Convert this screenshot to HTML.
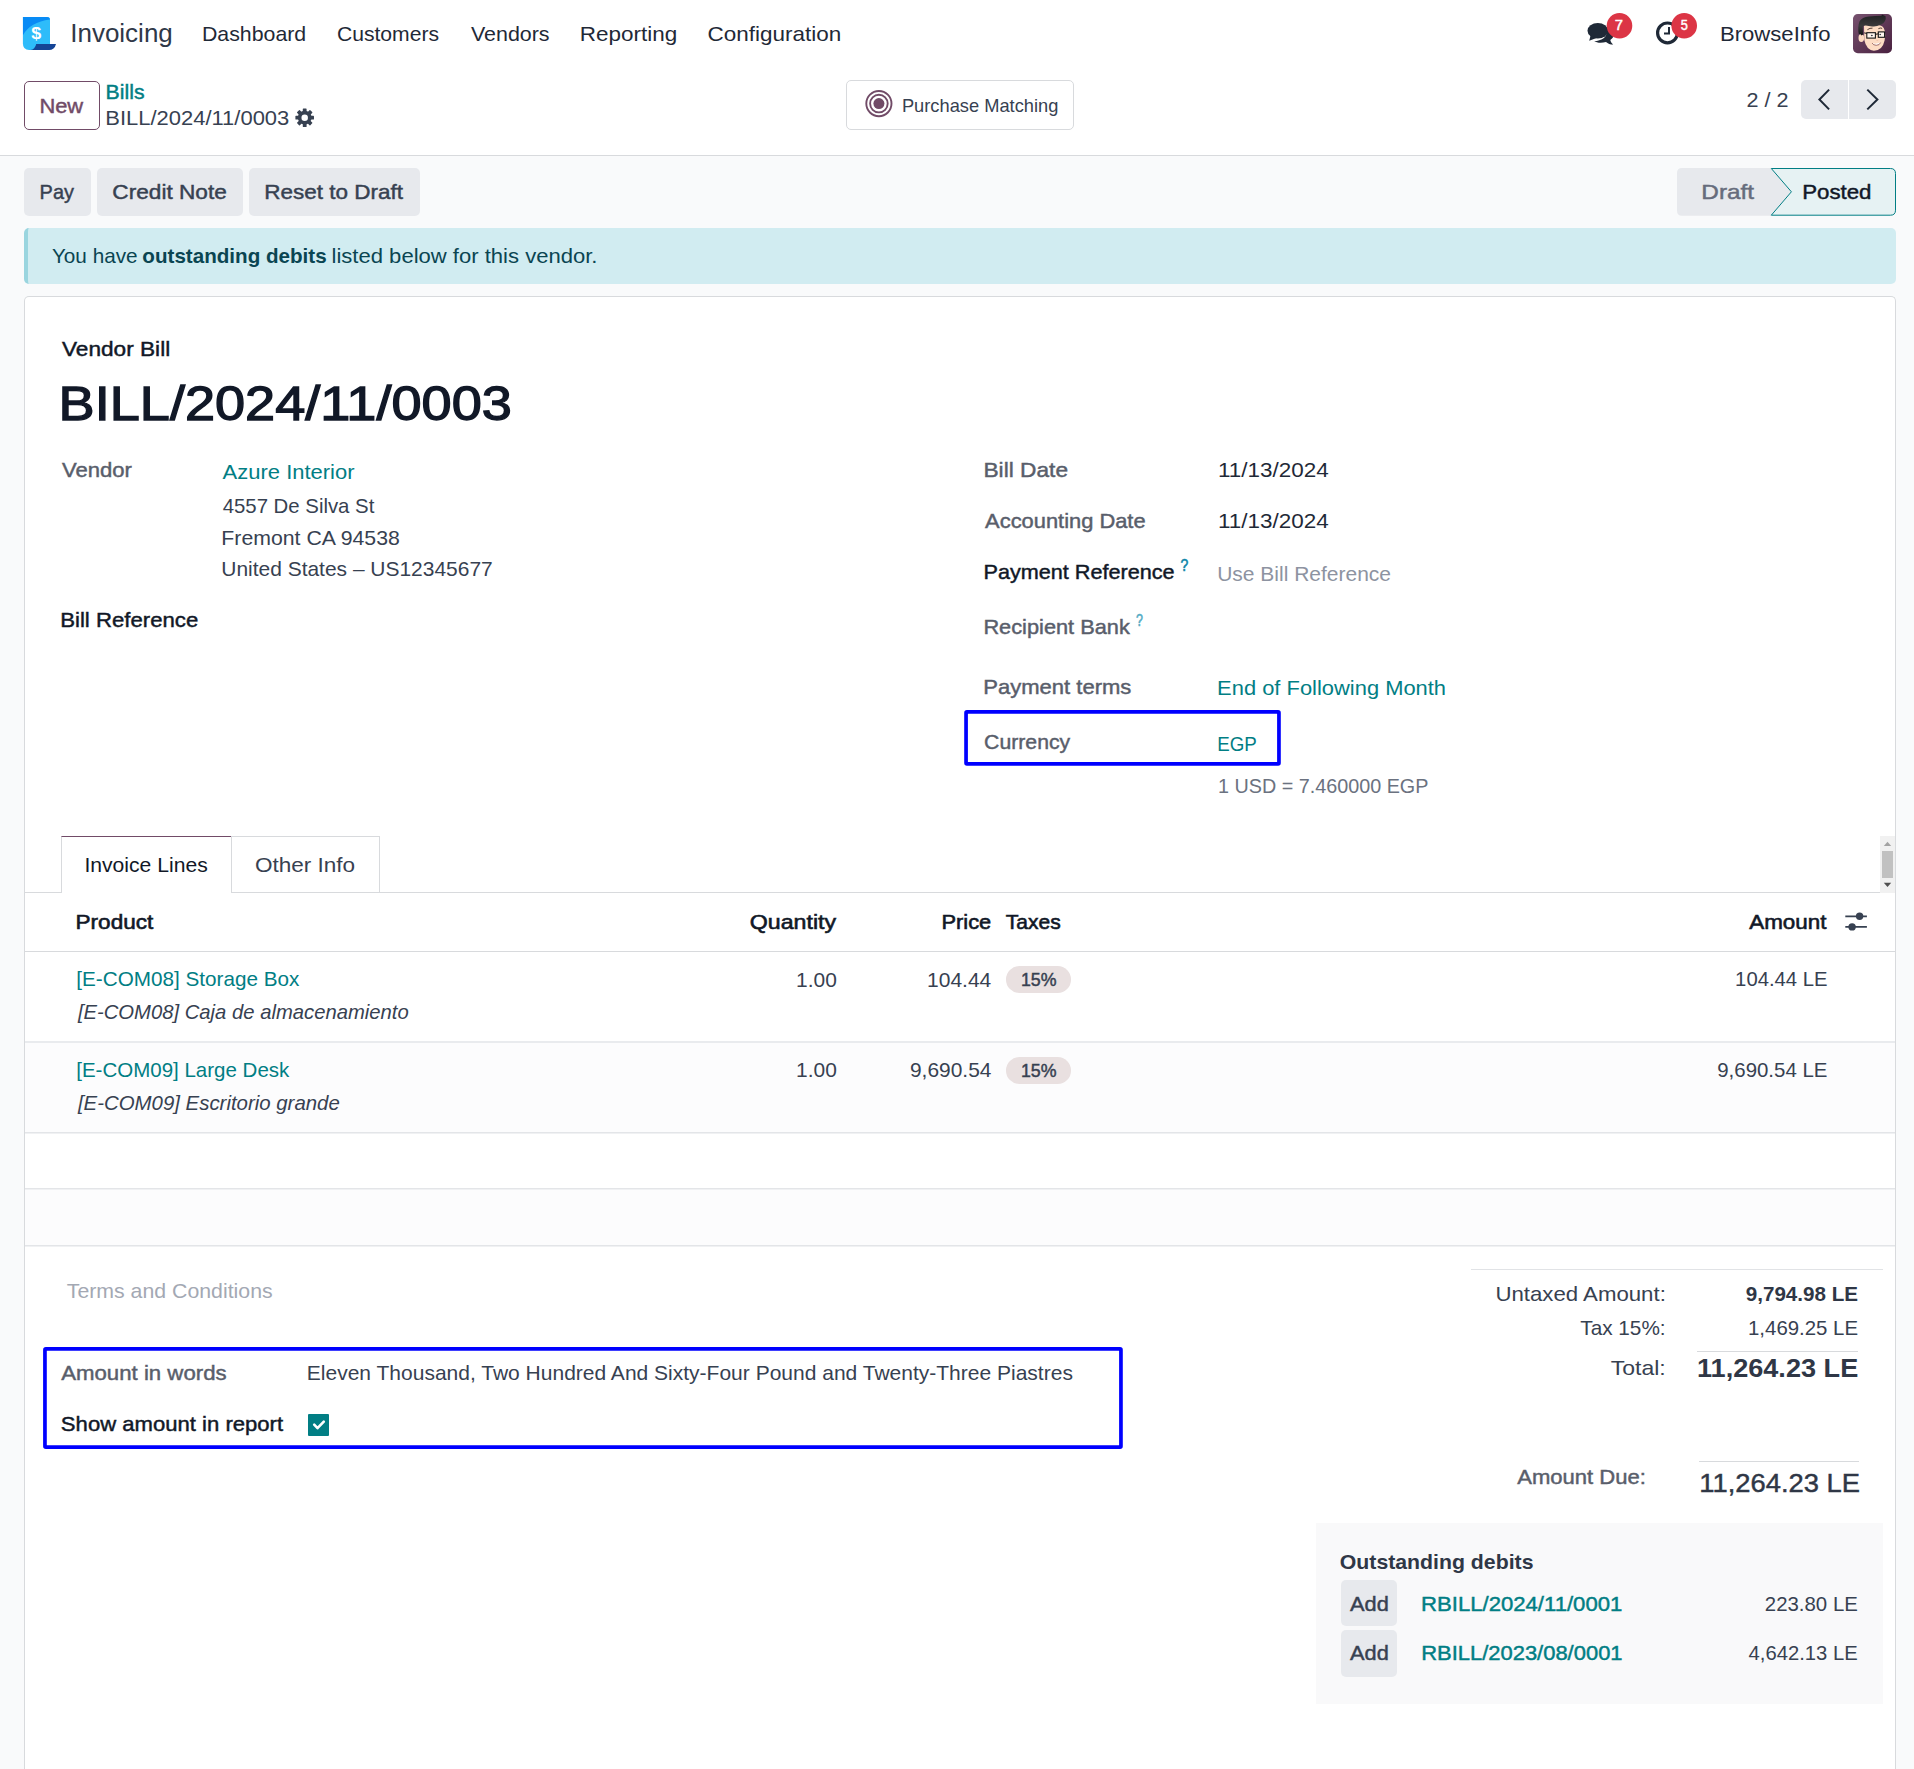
<!DOCTYPE html>
<html lang="en">
<head>
<meta charset="utf-8">
<title>Odoo - BILL/2024/11/0003</title>
<style>
html,body{margin:0;padding:0;}
html{width:1914px;height:1769px;overflow:hidden;}
body{width:1914px;height:1769px;overflow:hidden;background:#f9fafb;position:relative;
 font-family:"Liberation Sans",sans-serif;color:#374151;}
.a{position:absolute;box-sizing:border-box;}
.t{position:absolute;left:0;top:0;white-space:pre;line-height:1;margin:0;padding:0;font-weight:400;transform-origin:0 0;}
.t b{font-weight:700;}
.w-m{-webkit-text-stroke:0.45px currentColor;}
.w-x{-webkit-text-stroke:1.3px currentColor;}
.w-s{-webkit-text-stroke:0.6px currentColor;}
.w-b{font-weight:700;}
.i{font-style:italic;}
.btn{background:#e7e9ed;border-radius:5px;}
.hl{height:1px;background:#dcdee2;}
.hl2{height:2px;background:linear-gradient(#e3e5e8 50%,#f0f1f3 50%);}
svg{position:absolute;overflow:visible;}

</style>
</head>
<body>
<!-- ===== top navbar + control panel ===== -->
<header class="a s" id="top" style="left:0;top:0;width:1914px;height:156px;background:#fff;border-bottom:1px solid #d8dadd;"></header>

<!-- app logo -->
<svg class="s" style="left:0;top:0" width="80" height="60" viewBox="0 0 80 60">
 <defs><clipPath id="lg"><path d="M22.9 16.9 H47 Q50 16.9 50 20 V50 H29.2 Q22.9 50 22.9 43.6 Z"/></clipPath></defs>
 <path d="M22.9 16.9 H47 Q50 16.9 50 20 V50 H29.2 Q22.9 50 22.9 43.6 Z" fill="#2ebcfa"/>
 <path clip-path="url(#lg)" d="M22.9 16.9 H50 V19.4 Q30 22 22.9 35.2 Z" fill="#088bf5"/>
 <path d="M36.2 43.9 H56 Q54.6 50 48.8 50 H30.4 Q35 49.4 36.2 43.9 Z" fill="#144496"/>
</svg>

<!-- systray: messages -->
<svg class="s" style="left:0;top:0" width="1914" height="70" viewBox="0 0 1914 70">
 <g fill="#1f2937">
  <path d="M1600.6 27.2 c8.2 0 13.3 2.6 13.3 6.9 c0 2.6 -1.4 4.6 -3.6 5.9 c0.4 1.7 1.3 3.2 2.9 4.6 c-2.9 0 -5.4 -1 -7.2 -2.6 c-1.7 0.5 -3.5 0.7 -5.4 0.7 c-2.6 0 -4.8 -0.6 -6.5 -1.5 c7.6 -0.4 12.6 -3.8 12.6 -8.7 c0 -2 -0.9 -3.8 -2.4 -5.2 Z"/>
  <ellipse cx="1597.8" cy="30.7" rx="10.3" ry="7.7"/>
  <path d="M1590.6 35.5 L1589.2 40.8 L1596.6 38 Z"/>
 </g>
 <circle cx="1619.5" cy="25.8" r="12.8" fill="#dc3545"/>
 <!-- activities clock -->
 <circle cx="1667.5" cy="32.9" r="9.9" fill="none" stroke="#1f2937" stroke-width="3.2"/>
 <path d="M1669 27 V33.6 H1664" fill="none" stroke="#1f2937" stroke-width="2"/>
 <circle cx="1684.2" cy="25.8" r="12.8" fill="#dc3545"/>
</svg>

<!-- avatar -->
<svg class="s" style="left:1853px;top:13.8px" width="39" height="39.2" viewBox="0 0 39 39.2">
 <defs>
  <linearGradient id="avg" x1="0" y1="0" x2="1" y2="1"><stop offset="0" stop-color="#77526f"/><stop offset="1" stop-color="#49213f"/></linearGradient>
  <linearGradient id="hair" x1="0" y1="0" x2="0" y2="1"><stop offset="0" stop-color="#202022"/><stop offset="0.55" stop-color="#3a3a3c"/><stop offset="1" stop-color="#141416"/></linearGradient>
  <clipPath id="avc"><rect width="39" height="39.2" rx="4.8"/></clipPath>
 </defs>
 <rect width="39" height="39.2" rx="4.8" fill="url(#avg)"/>
 <g clip-path="url(#avc)">
  <ellipse cx="8.3" cy="24" rx="2.8" ry="3.9" fill="#fbd9c0"/>
  <path d="M11 12 Q11 10.5 20 10.5 Q31.5 10 32 17.5 Q32.6 22 31.6 26.5 Q29.5 36.7 20.9 36.7 Q13.4 36.2 11.3 26 Z" fill="#fddcc4"/>
  <path d="M5.9 20.4 Q4.2 13 6.6 7.2 Q9 3.2 16 2.4 Q22 1.7 28.5 1.7 L29 0.6 L32.6 2.2 Q33.2 5 32 6.9 Q30.8 9.4 27.9 10.7 Q24 12.4 20.7 12.4 Q16 12.6 12.8 11.6 Q10.6 11.4 9.8 12.8 L10.1 20.4 L8.5 21.4 Q7 19.4 5.9 20.4 Z" fill="url(#hair)"/>
  <path d="M14.7 15.5 Q17 13.8 19.1 14.1 M25.7 14.5 Q27.4 13.5 28.8 14.2" stroke="#40302a" stroke-width="0.9" fill="none" stroke-linecap="round"/>
  <rect x="13.8" y="18.7" width="8.6" height="5.4" fill="#fff6ee" stroke="#141414" stroke-width="1.1"/>
  <rect x="25.3" y="17.9" width="6.3" height="5.4" fill="#fff6ee" stroke="#141414" stroke-width="1.1"/>
  <path d="M22.4 20.3 L25.3 19.9 M13.8 19.4 L11.2 18.9" stroke="#141414" stroke-width="1"/>
  <ellipse cx="18.8" cy="21.5" rx="1" ry="0.8" fill="#3b3b45"/><ellipse cx="27.2" cy="20.5" rx="0.9" ry="0.8" fill="#3b3b45"/>
  <path d="M23.4 26.3 Q24.4 26.9 25.3 26.2" stroke="#e9b49c" stroke-width="0.7" fill="none"/>
  <path d="M19.1 29.1 Q23.4 30.4 27.6 28.6 Q26.6 31.4 23.2 31.3 Q20.2 31.2 19.1 29.1 Z" fill="#ffffff"/>
  <path d="M19.1 29.1 Q20.2 31.2 23.2 31.3 Q26.6 31.4 27.6 28.6" fill="none" stroke="#7d3b3a" stroke-width="0.7"/>
 </g>
</svg>

<!-- New button -->
<div class="a s" style="left:24px;top:81px;width:76px;height:48.8px;border:1px solid #714B67;border-radius:5px;background:#fff"></div>
<!-- gear -->
<svg class="s" style="left:295px;top:107.8px" width="19.4" height="19.4" viewBox="-9.7 -9.7 19.4 19.4">
 <g fill="#374151">
  <circle r="6.9"/>
  <g id="teeth"><rect x="-1.9" y="-9.3" width="3.8" height="18.6" rx="0.6"/><rect x="-9.3" y="-1.9" width="18.6" height="3.8" rx="0.6"/></g>
  <use href="#teeth" transform="rotate(45)"/>
 </g>
 <circle r="3.25" fill="#fff"/>
</svg>

<!-- Purchase Matching smart button -->
<div class="a s" style="left:846.3px;top:80.3px;width:227.7px;height:49.3px;border:1px solid #d8dadd;border-radius:5px;background:#fff"></div>
<svg class="s" style="left:864px;top:89px" width="30" height="30" viewBox="864 89 30 30">
 <circle cx="878.9" cy="103.6" r="12.6" fill="none" stroke="#714B67" stroke-width="1.9"/>
 <circle cx="878.9" cy="103.6" r="8.8" fill="none" stroke="#714B67" stroke-width="1.9"/>
 <circle cx="878.9" cy="103.6" r="5.5" fill="#714B67"/>
</svg>

<!-- pager -->
<div class="a s" style="left:1801px;top:80px;width:46.9px;height:39px;background:#e7e9ed;border-radius:5px 0 0 5px"></div>
<div class="a s" style="left:1849.1px;top:80px;width:46.9px;height:39px;background:#e7e9ed;border-radius:0 5px 5px 0"></div>
<svg class="s" style="left:1801px;top:80px" width="95" height="39" viewBox="1801 80 95 39">
 <path d="M1829.1 89.6 L1819.4 99.5 L1829.1 109.4 M1867.3 89.6 L1877.4 99.5 L1867.3 109.4" fill="none" stroke="#1f2937" stroke-width="2"/>
</svg>

<!-- ===== status bar ===== -->
<div class="a s btn" style="left:24px;top:168px;width:66.8px;height:47.7px"></div>
<div class="a s btn" style="left:97px;top:168px;width:145.8px;height:47.7px"></div>
<div class="a s btn" style="left:249px;top:168px;width:171px;height:47.7px"></div>
<svg class="s" style="left:1677px;top:167px" width="220" height="50" viewBox="1677 167 220 50">
 <path d="M1682 168 H1771.3 L1791.4 191.8 L1771.3 215.7 H1682 Q1677 215.7 1677 210.7 V173 Q1677 168 1682 168 Z" fill="#e7e9ed"/>
 <path d="M1771.3 168.5 H1890.5 Q1895.5 168.5 1895.5 173.5 V210.2 Q1895.5 215.2 1890.5 215.2 H1771.3 L1791.4 191.8 Z" fill="#e6f2f3" stroke="#017e84" stroke-width="1"/>
</svg>

<!-- alert -->
<div class="a s" style="left:24px;top:228.2px;width:1872px;height:55.5px;background:#d1ecf1;border-radius:5px;border-left:4px solid #9ad5df"></div>

<!-- ===== form sheet ===== -->
<main class="a s" id="sheet" style="left:24px;top:296px;width:1872px;height:1473px;background:#fff;border:1px solid #d8dadd;border-bottom:0;border-radius:5px 5px 0 0"></main>

<!-- currency highlight -->
<svg class="s" style="left:0;top:700px" width="1914" height="80" viewBox="0 700 1914 80"><rect x="966.05" y="711.95" width="312.9" height="52" rx="0.9" fill="none" stroke="#0000ff" stroke-width="3.7"/></svg>

<!-- notebook tabs -->
<div class="a s hl" style="left:25px;top:892px;width:1855px;background:#d8dadd"></div>
<div class="a s" style="left:61.4px;top:836px;width:170.4px;height:57px;background:#fff;border:1px solid #d8dadd;border-bottom:0;border-top-color:#714B67"></div>
<div class="a s" style="left:230.8px;top:836px;width:149.4px;height:56px;background:#fff;border:1px solid #d8dadd;border-bottom:0"></div>
<!-- scrollbar -->
<div class="a s" style="left:1880px;top:836px;width:15px;height:56.8px;background:#f1f1f1"></div>
<div class="a s" style="left:1882.2px;top:851px;width:10.6px;height:27px;background:#c1c1c1"></div>
<svg class="s" style="left:1880px;top:836px" width="15" height="57" viewBox="1880 836 15 57">
 <path d="M1883.8 846 L1887.5 841.8 L1891.2 846 Z" fill="#a3a3a3"/>
 <path d="M1883.8 882.8 L1887.5 887 L1891.2 882.8 Z" fill="#505050"/>
</svg>

<!-- list rows -->
<div class="a s" style="left:25px;top:1042px;width:1870px;height:91px;background:#fcfcfd"></div>
<div class="a s" style="left:25px;top:1189px;width:1870px;height:57px;background:#fcfcfd"></div>
<div class="a s hl" style="left:25px;top:951px;width:1870px;background:#d8dadd"></div>
<div class="a s hl2" style="left:25px;top:1041px;width:1870px;background:#e9ebee"></div>
<div class="a s hl2" style="left:25px;top:1132px;width:1870px"></div>
<div class="a s hl2" style="left:25px;top:1188px;width:1870px"></div>
<div class="a s hl2" style="left:25px;top:1245px;width:1870px"></div>
<!-- tax badges -->
<div class="a s" style="left:1006px;top:966.3px;width:65px;height:26.8px;border-radius:13.3px;background:#e9e0e0"></div>
<div class="a s" style="left:1006px;top:1057.4px;width:65px;height:26.8px;border-radius:13.3px;background:#e9e0e0"></div>
<!-- optional columns icon -->
<svg class="s" style="left:1845px;top:910px" width="24" height="24" viewBox="1845 910 24 24">
 <path d="M1845.3 916.3 H1866.9 M1845.3 926.9 H1866.9" stroke="#374151" stroke-width="1.7" fill="none"/>
 <circle cx="1859.6" cy="916.3" r="3.7" fill="#374151"/><circle cx="1852.1" cy="926.9" r="3.7" fill="#374151"/>
</svg>

<!-- amount in words highlight -->
<svg class="s" style="left:0;top:1340px" width="1914" height="120" viewBox="0 1340 1914 120"><rect x="44.95" y="1348.95" width="1076" height="98.1" rx="0.9" fill="none" stroke="#0000ff" stroke-width="3.7"/></svg>
<div class="a s" style="left:308px;top:1414.2px;width:21px;height:21.5px;background:#017e84;border-radius:1px"></div>
<svg class="s" style="left:308px;top:1414px" width="21" height="22" viewBox="308 1414 21 22">
 <path d="M314.2 1424.7 L317.5 1428.2 L323.8 1421.6" fill="none" stroke="#fff" stroke-width="2.6" stroke-linecap="round" stroke-linejoin="round"/>
</svg>

<!-- totals -->
<div class="a s hl" style="left:1470.8px;top:1269.2px;width:412.2px;background:#e1e3e6"></div>
<div class="a s hl" style="left:1696.7px;top:1351.4px;width:161.1px;background:#d8dadd"></div>
<div class="a s hl" style="left:1699px;top:1461.2px;width:160px;background:#d8dadd"></div>
<!-- outstanding debits -->
<div class="a s" style="left:1316px;top:1522.5px;width:567px;height:181.5px;background:#f9f9fa"></div>
<div class="a s btn" style="left:1341px;top:1579.5px;width:55.7px;height:46.8px"></div>
<div class="a s btn" style="left:1341px;top:1630.2px;width:55.7px;height:47px"></div>

<!-- ===== text ===== -->
<span class="t" id="brand" style="font-size:26px;color:#2f3848;transform:translate(70.19px,20.00px) scaleX(1.0002);">Invoicing</span>
<span class="t" id="m1" style="font-size:21px;color:#1f2937;transform:translate(201.94px,23.00px) scaleX(1.0148);">Dashboard</span>
<span class="t" id="m2" style="font-size:21px;color:#1f2937;transform:translate(336.93px,23.00px) scaleX(1.0060);">Customers</span>
<span class="t" id="m3" style="font-size:21px;color:#1f2937;transform:translate(470.93px,23.00px) scaleX(1.0206);">Vendors</span>
<span class="t" id="m4" style="font-size:21px;color:#1f2937;transform:translate(579.71px,23.00px) scaleX(1.0707);">Reporting</span>
<span class="t" id="m5" style="font-size:21px;color:#1f2937;transform:translate(707.45px,23.00px) scaleX(1.0705);">Configuration</span>
<span class="t w-m" id="b7" style="font-size:14px;color:#ffffff;transform:translate(1614.71px,18.00px) scaleX(1.0571);">7</span>
<span class="t w-m" id="b5" style="font-size:14px;color:#ffffff;transform:translate(1680.64px,18.00px) scaleX(0.9097);">5</span>
<span class="t" id="user" style="font-size:21px;color:#1f2937;transform:translate(1720.00px,23.00px) scaleX(1.0515);">BrowseInfo</span>
<span class="t w-m" id="new" style="font-size:21px;color:#714B67;transform:translate(39.38px,95.00px) scaleX(1.0425);">New</span>
<span class="t w-m" id="bc1" style="font-size:21px;color:#017e84;transform:translate(105.62px,81.00px) scaleX(1.0092);">Bills</span>
<span class="t" id="bc2" style="font-size:20px;color:#374151;transform:translate(105.34px,108.00px) scaleX(1.0977);">BILL/2024/11/0003</span>
<span class="t" id="pm" style="font-size:19px;color:#374151;transform:translate(901.89px,96.00px) scaleX(0.9620);">Purchase Matching</span>
<span class="t" id="pager" style="font-size:20px;color:#374151;transform:translate(1746.57px,90.00px) scaleX(1.0795);">2 / 2</span>
<span class="t w-m" id="pay" style="font-size:21px;color:#374151;transform:translate(39.62px,181.00px) scaleX(0.9482);">Pay</span>
<span class="t w-m" id="cn" style="font-size:21px;color:#374151;transform:translate(112.37px,181.00px) scaleX(1.0769);">Credit Note</span>
<span class="t w-m" id="rd" style="font-size:21px;color:#374151;transform:translate(264.32px,181.00px) scaleX(1.0709);">Reset to Draft</span>
<span class="t w-m" id="draft" style="font-size:21px;color:#666c7c;transform:translate(1701.35px,181.00px) scaleX(1.1592);">Draft</span>
<span class="t w-m" id="posted" style="font-size:21px;color:#111827;transform:translate(1802.16px,181.00px) scaleX(1.0606);">Posted</span>
<span class="t" id="al1" style="font-size:21px;color:#0a4552;transform:translate(51.90px,245.00px) scaleX(0.9877);">You have</span>
<span class="t w-b" id="al2" style="font-size:21px;color:#0a4552;transform:translate(142.35px,245.00px) scaleX(0.9813);">outstanding debits</span>
<span class="t" id="al3" style="font-size:21px;color:#0a4552;transform:translate(331.52px,245.00px) scaleX(1.0499);">listed below for this vendor.</span>
<span class="t w-m" id="vb" style="font-size:21px;color:#111827;transform:translate(61.93px,338.00px) scaleX(1.0784);">Vendor Bill</span>
<h1 class="t w-x" id="title" style="font-size:47.6px;color:#111827;transform:translate(58.61px,380.00px) scaleX(1.1366);">BILL/2024/11/0003</h1>
<span class="t w-m" id="l_vendor" style="font-size:21px;color:#595e6b;transform:translate(61.96px,459.00px) scaleX(1.0508);">Vendor</span>
<span class="t" id="v_vendor" style="font-size:21px;color:#017e84;transform:translate(222.61px,461.00px) scaleX(1.0467);">Azure Interior</span>
<span class="t" id="a1" style="font-size:21px;color:#374151;transform:translate(222.65px,495.00px) scaleX(0.9697);">4557 De Silva St</span>
<span class="t" id="a2" style="font-size:21px;color:#374151;transform:translate(221.32px,527.00px) scaleX(1.0128);">Fremont CA 94538</span>
<span class="t" id="a3" style="font-size:21px;color:#374151;transform:translate(221.26px,558.00px) scaleX(0.9978);">United States – US12345677</span>
<span class="t w-m" id="l_ref" style="font-size:21px;color:#111827;transform:translate(60.22px,609.00px) scaleX(1.0557);">Bill Reference</span>
<span class="t w-m" id="l_bd" style="font-size:21px;color:#595e6b;transform:translate(983.48px,459.00px) scaleX(1.0809);">Bill Date</span>
<span class="t" id="v_bd" style="font-size:21px;color:#1f2937;transform:translate(1217.91px,459.00px) scaleX(1.0693);">11/13/2024</span>
<span class="t w-m" id="l_ad" style="font-size:21px;color:#595e6b;transform:translate(985.11px,510.00px) scaleX(1.0416);">Accounting Date</span>
<span class="t" id="v_ad" style="font-size:21px;color:#1f2937;transform:translate(1217.91px,510.00px) scaleX(1.0693);">11/13/2024</span>
<span class="t w-m" id="l_pr" style="font-size:21px;color:#111827;transform:translate(983.52px,561.00px) scaleX(1.0298);">Payment Reference</span>
<span class="t w-s" id="q1" style="font-size:16.4px;color:#0f87aa;transform:translate(1180.49px,557.00px) scaleX(0.8517);">?</span>
<span class="t" id="v_pr" style="font-size:21px;color:#8d93a1;transform:translate(1217.16px,563.00px) scaleX(0.9998);">Use Bill Reference</span>
<span class="t w-m" id="l_rb" style="font-size:21px;color:#595e6b;transform:translate(983.40px,616.00px) scaleX(1.0365);">Recipient Bank</span>
<span class="t w-s" id="q2" style="font-size:16.4px;color:#55acc5;transform:translate(1135.98px,612.00px) scaleX(0.7587);">?</span>
<span class="t w-m" id="l_pt" style="font-size:21px;color:#595e6b;transform:translate(983.24px,676.00px) scaleX(1.0491);">Payment terms</span>
<span class="t" id="v_pt" style="font-size:21px;color:#017e84;transform:translate(1217.08px,677.00px) scaleX(1.0434);">End of Following Month</span>
<span class="t w-m" id="l_cur" style="font-size:21px;color:#595e6b;transform:translate(984.12px,731.00px) scaleX(1.0097);">Currency</span>
<span class="t" id="v_cur" style="font-size:21px;color:#017e84;transform:translate(1217.32px,733.00px) scaleX(0.8914);">EGP</span>
<span class="t" id="rate" style="font-size:20px;color:#6b7280;transform:translate(1218.04px,776.00px) scaleX(0.9879);">1 USD = 7.460000 EGP</span>
<span class="t" id="t1" style="font-size:21px;color:#111827;transform:translate(84.42px,854.00px) scaleX(1.0057);">Invoice Lines</span>
<span class="t" id="t2" style="font-size:21px;color:#374151;transform:translate(254.91px,854.00px) scaleX(1.0729);">Other Info</span>
<span class="t w-s" id="h_prod" style="font-size:21px;color:#111827;transform:translate(75.58px,911.00px) scaleX(1.0729);">Product</span>
<span class="t w-s" id="h_qty" style="font-size:21px;color:#111827;transform:translate(749.77px,911.00px) scaleX(1.1037);">Quantity</span>
<span class="t w-s" id="h_price" style="font-size:21px;color:#111827;transform:translate(941.57px,911.00px) scaleX(1.0371);">Price</span>
<span class="t w-s" id="h_tax" style="font-size:21px;color:#111827;transform:translate(1005.85px,911.00px) scaleX(1.0002);">Taxes</span>
<span class="t w-s" id="h_amt" style="font-size:21px;color:#111827;transform:translate(1749.22px,911.00px) scaleX(1.0671);">Amount</span>
<span class="t" id="r1a" style="font-size:21px;color:#017e84;transform:translate(76.24px,968.00px) scaleX(0.9854);">[E-COM08] Storage Box</span>
<span class="t i" id="r1b" style="font-size:21px;color:#374151;transform:translate(77.88px,1001.00px) scaleX(0.9640);">[E-COM08] Caja de almacenamiento</span>
<span class="t" id="r1q" style="font-size:21px;color:#374151;transform:translate(796.12px,969.00px) scaleX(0.9967);">1.00</span>
<span class="t" id="r1p" style="font-size:21px;color:#374151;transform:translate(927.07px,969.00px) scaleX(0.9997);">104.44</span>
<span class="t w-m" id="r1t" style="font-size:17.5px;color:#374151;transform:translate(1020.93px,972.00px) scaleX(1.0157);">15%</span>
<span class="t" id="r1am" style="font-size:21px;color:#374151;transform:translate(1735.11px,968.00px) scaleX(0.9650);">104.44 LE</span>
<span class="t" id="r2a" style="font-size:21px;color:#017e84;transform:translate(76.22px,1059.00px) scaleX(0.9763);">[E-COM09] Large Desk</span>
<span class="t i" id="r2b" style="font-size:21px;color:#374151;transform:translate(77.88px,1092.00px) scaleX(0.9715);">[E-COM09] Escritorio grande</span>
<span class="t" id="r2q" style="font-size:21px;color:#374151;transform:translate(796.12px,1059.00px) scaleX(0.9967);">1.00</span>
<span class="t" id="r2p" style="font-size:21px;color:#374151;transform:translate(909.96px,1059.00px) scaleX(0.9964);">9,690.54</span>
<span class="t w-m" id="r2t" style="font-size:17.5px;color:#374151;transform:translate(1020.93px,1063.00px) scaleX(1.0157);">15%</span>
<span class="t" id="r2am" style="font-size:21px;color:#374151;transform:translate(1717.25px,1059.00px) scaleX(0.9727);">9,690.54 LE</span>
<span class="t" id="tc" style="font-size:21px;color:#a3a8b3;transform:translate(66.76px,1280.00px) scaleX(1.0136);">Terms and Conditions</span>
<span class="t w-m" id="l_aw" style="font-size:21px;color:#595e6b;transform:translate(61.21px,1362.00px) scaleX(1.0575);">Amount in words</span>
<span class="t" id="v_aw" style="font-size:21px;color:#374151;transform:translate(306.81px,1362.00px) scaleX(1.0004);">Eleven Thousand, Two Hundred And Sixty-Four Pound and Twenty-Three Piastres</span>
<span class="t w-m" id="l_sa" style="font-size:21px;color:#111827;transform:translate(60.87px,1413.00px) scaleX(1.0519);">Show amount in report</span>
<span class="t" id="tu_l" style="font-size:21px;color:#374151;transform:translate(1495.47px,1283.00px) scaleX(1.0573);">Untaxed Amount:</span>
<span class="t w-b" id="tu_v" style="font-size:21px;color:#2f3746;transform:translate(1745.74px,1283.00px) scaleX(0.9813);">9,794.98 LE</span>
<span class="t" id="tt_l" style="font-size:21px;color:#374151;transform:translate(1580.25px,1317.00px) scaleX(0.9884);">Tax 15%:</span>
<span class="t" id="tt_v" style="font-size:21px;color:#374151;transform:translate(1748.03px,1317.00px) scaleX(0.9712);">1,469.25 LE</span>
<span class="t" id="to_l" style="font-size:21px;color:#374151;transform:translate(1610.75px,1357.00px) scaleX(1.0958);">Total:</span>
<span class="t w-b" id="to_v" style="font-size:25px;color:#2f3746;transform:translate(1696.98px,1356.00px) scaleX(1.0840);">11,264.23 LE</span>
<span class="t w-m" id="du_l" style="font-size:21px;color:#595e6b;transform:translate(1517.16px,1466.00px) scaleX(1.0510);">Amount Due:</span>
<span class="t w-m" id="du_v" style="font-size:26px;color:#2f3746;transform:translate(1699.34px,1470.00px) scaleX(1.0509);">11,264.23 LE</span>
<span class="t w-b" id="od" style="font-size:21px;color:#2f3746;transform:translate(1339.80px,1551.00px) scaleX(1.0122);">Outstanding debits</span>
<span class="t w-m" id="add1" style="font-size:21px;color:#374151;transform:translate(1350.05px,1593.00px) scaleX(1.0365);">Add</span>
<span class="t w-m" id="ob1" style="font-size:21px;color:#017e84;transform:translate(1421.00px,1593.00px) scaleX(1.0534);">RBILL/2024/11/0001</span>
<span class="t" id="oa1" style="font-size:21px;color:#374151;transform:translate(1764.85px,1593.00px) scaleX(0.9709);">223.80 LE</span>
<span class="t w-m" id="add2" style="font-size:21px;color:#374151;transform:translate(1350.05px,1642.00px) scaleX(1.0365);">Add</span>
<span class="t w-m" id="ob2" style="font-size:21px;color:#017e84;transform:translate(1421.15px,1642.00px) scaleX(1.0454);">RBILL/2023/08/0001</span>
<span class="t" id="oa2" style="font-size:21px;color:#374151;transform:translate(1748.55px,1642.00px) scaleX(0.9632);">4,642.13 LE</span>
<span class="t w-b" id="dollar" style="font-size:16.6px;color:#ffffff;transform:translate(31.34px,26.00px) scaleX(1.0818);">$</span>
</body>
</html>
